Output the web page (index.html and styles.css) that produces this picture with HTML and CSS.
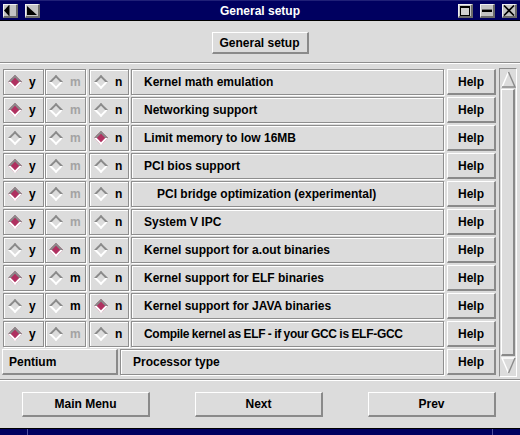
FILE: index.html
```html
<!DOCTYPE html>
<html>
<head>
<meta charset="utf-8">
<link rel="stylesheet" href="styles.css">
</head>
<body>
<div class="titlebar">
  <div class="tb-group">
    <div class="tb-btn"><svg width="12" height="11" viewBox="0 0 12 11"><polygon points="5,0 5,11 0,5.5" fill="#000"/><rect x="5" y="0" width="1" height="11" fill="#606060"/></svg></div>
    <div class="tb-btn"><svg width="12" height="11" viewBox="0 0 12 11"><polygon points="1,1 11,10 1,10" fill="#000"/></svg></div>
  </div>
  <div class="tb-title">General setup</div>
  <div class="tb-group tb-right">
    <div class="tb-btn"><svg width="12" height="11" viewBox="0 0 12 11"><rect x="1.5" y="1.5" width="9" height="9" fill="#d0d0d0" stroke="#000" stroke-width="1"/><rect x="1" y="1" width="10" height="2" fill="#000"/></svg></div>
    <div class="tb-btn"><svg width="12" height="11" viewBox="0 0 12 11"><rect x="1" y="5" width="10" height="2" fill="#000"/><rect x="1" y="4" width="10" height="1" fill="#707070"/></svg></div>
    <div class="tb-btn"><svg width="12" height="11" viewBox="0 0 12 11"><path d="M1 0.5 L11 10.5 M11 0.5 L1 10.5" stroke="#000" stroke-width="1.6"/></svg></div>
  </div>
</div>

<div class="header">
  <div class="btn gen-btn">General setup</div>
</div>
<div class="sep"></div>

<div class="content">
  <div class="rows">
    <div class="row">
      <div class="cell c1"><span class="ind"><span class="dia on"></span></span><span class="lt">y</span></div>
      <div class="cell c2"><span class="ind"><span class="dia"></span></span><span class="lt dis">m</span></div>
      <div class="cell c3"><span class="ind"><span class="dia"></span></span><span class="lt">n</span></div>
      <div class="cell label">Kernel math emulation</div>
      <div class="btn help">Help</div>
    </div>
    <div class="row">
      <div class="cell c1"><span class="ind"><span class="dia on"></span></span><span class="lt">y</span></div>
      <div class="cell c2"><span class="ind"><span class="dia"></span></span><span class="lt dis">m</span></div>
      <div class="cell c3"><span class="ind"><span class="dia"></span></span><span class="lt">n</span></div>
      <div class="cell label">Networking support</div>
      <div class="btn help">Help</div>
    </div>
    <div class="row">
      <div class="cell c1"><span class="ind"><span class="dia"></span></span><span class="lt">y</span></div>
      <div class="cell c2"><span class="ind"><span class="dia"></span></span><span class="lt dis">m</span></div>
      <div class="cell c3"><span class="ind"><span class="dia on"></span></span><span class="lt">n</span></div>
      <div class="cell label">Limit memory to low 16MB</div>
      <div class="btn help">Help</div>
    </div>
    <div class="row">
      <div class="cell c1"><span class="ind"><span class="dia on"></span></span><span class="lt">y</span></div>
      <div class="cell c2"><span class="ind"><span class="dia"></span></span><span class="lt dis">m</span></div>
      <div class="cell c3"><span class="ind"><span class="dia"></span></span><span class="lt">n</span></div>
      <div class="cell label">PCI bios support</div>
      <div class="btn help">Help</div>
    </div>
    <div class="row">
      <div class="cell c1"><span class="ind"><span class="dia on"></span></span><span class="lt">y</span></div>
      <div class="cell c2"><span class="ind"><span class="dia"></span></span><span class="lt dis">m</span></div>
      <div class="cell c3"><span class="ind"><span class="dia"></span></span><span class="lt">n</span></div>
      <div class="cell label indent">PCI bridge optimization (experimental)</div>
      <div class="btn help">Help</div>
    </div>
    <div class="row">
      <div class="cell c1"><span class="ind"><span class="dia on"></span></span><span class="lt">y</span></div>
      <div class="cell c2"><span class="ind"><span class="dia"></span></span><span class="lt dis">m</span></div>
      <div class="cell c3"><span class="ind"><span class="dia"></span></span><span class="lt">n</span></div>
      <div class="cell label">System V IPC</div>
      <div class="btn help">Help</div>
    </div>
    <div class="row">
      <div class="cell c1"><span class="ind"><span class="dia"></span></span><span class="lt">y</span></div>
      <div class="cell c2"><span class="ind"><span class="dia on"></span></span><span class="lt">m</span></div>
      <div class="cell c3"><span class="ind"><span class="dia"></span></span><span class="lt">n</span></div>
      <div class="cell label">Kernel support for a.out binaries</div>
      <div class="btn help">Help</div>
    </div>
    <div class="row">
      <div class="cell c1"><span class="ind"><span class="dia on"></span></span><span class="lt">y</span></div>
      <div class="cell c2"><span class="ind"><span class="dia"></span></span><span class="lt">m</span></div>
      <div class="cell c3"><span class="ind"><span class="dia"></span></span><span class="lt">n</span></div>
      <div class="cell label">Kernel support for ELF binaries</div>
      <div class="btn help">Help</div>
    </div>
    <div class="row">
      <div class="cell c1"><span class="ind"><span class="dia"></span></span><span class="lt">y</span></div>
      <div class="cell c2"><span class="ind"><span class="dia"></span></span><span class="lt">m</span></div>
      <div class="cell c3"><span class="ind"><span class="dia on"></span></span><span class="lt">n</span></div>
      <div class="cell label">Kernel support for JAVA binaries</div>
      <div class="btn help">Help</div>
    </div>
    <div class="row">
      <div class="cell c1"><span class="ind"><span class="dia on"></span></span><span class="lt">y</span></div>
      <div class="cell c2"><span class="ind"><span class="dia"></span></span><span class="lt dis">m</span></div>
      <div class="cell c3"><span class="ind"><span class="dia"></span></span><span class="lt">n</span></div>
      <div class="cell label tight">Compile kernel as ELF - if your GCC is ELF-GCC</div>
      <div class="btn help">Help</div>
    </div>
    <div class="row prow">
      <div class="btn pbtn">Pentium</div>
      <div class="cell plabel">Processor type</div>
      <div class="btn help">Help</div>
    </div>
  </div>
  <div class="scrollbar">
    <svg class="arrow" width="15" height="17" viewBox="0 0 15 17"><path d="M7.5 1 L1 16" stroke="#fff" stroke-width="1.4" fill="none"/><path d="M7.5 1 L14 16 L1 16" stroke="#8a8a8a" stroke-width="1.4" fill="none"/></svg>
    <div class="slider"></div>
    <svg class="arrow" width="15" height="17" viewBox="0 0 15 17"><path d="M14 1 L1 1 L7.5 16" stroke="#fff" stroke-width="1.4" fill="none"/><path d="M14 1 L7.5 16" stroke="#8a8a8a" stroke-width="1.4" fill="none"/></svg>
  </div>
</div>
<div class="sep"></div>

<div class="footer">
  <div class="btn fbtn">Main Menu</div>
  <div class="btn fbtn">Next</div>
  <div class="btn fbtn">Prev</div>
</div>

<div class="strip">
  <div class="strip-seg s1"></div>
  <div class="strip-seg s2"></div>
  <div class="strip-seg s3"></div>
</div>
</body>
</html>
```

FILE: styles.css
```css
* { box-sizing: border-box; }

body {
  margin: 0;
  width: 520px;
  height: 435px;
  overflow: hidden;
  background: #dcdcdc;
  font: bold 12px "Liberation Sans", Arial, sans-serif;
  color: #000;
}

.titlebar {
  height: 21px;
  background: #000060;
  border-top: 1px solid #202078;
  border-bottom: 1px solid #000;
  display: grid;
  grid-template-columns: 1fr auto 1fr;
  align-items: center;
  padding: 0 3px;
}

.tb-group {
  display: flex;
  gap: 7px;
}

.tb-right { justify-self: end; }

.tb-btn {
  width: 15px;
  height: 14px;
  background: #c3c3c3;
  border-style: solid;
  border-width: 1px 2px 2px 1px;
  border-color: #f0f0f0 #6a6a6a #6a6a6a #f0f0f0;
  display: flex;
  align-items: center;
  justify-content: center;
}

.tb-btn svg { display: block; }

.tb-title {
  color: #fff;
  text-align: center;
}

.btn {
  background: #dcdcdc;
  border-style: solid;
  border-width: 1px 2px 2px 1px;
  border-color: #fff #8a8a8a #8a8a8a #fff;
  display: flex;
  align-items: center;
  justify-content: center;
}

.header {
  height: 41px;
  display: flex;
  justify-content: center;
  padding-top: 11px;
}

.gen-btn {
  width: 97px;
  height: 22px;
}

.sep {
  height: 2px;
  border-top: 1px solid #8e8e8e;
  border-bottom: 1px solid #fff;
}

.content {
  display: flex;
  height: 313px;
  padding: 4px 0 0 3px;
  margin-bottom: 2px;
}

.rows {
  width: 493px;
  margin-top: 1px;
  display: flex;
  flex-direction: column;
  gap: 2px;
}

.row {
  display: flex;
  height: 26px;
}

.cell {
  border: 1px solid #8e8e8e;
  box-shadow: inset 1px 1px 0 #fff, 1px 1px 0 #fff;
  display: flex;
  align-items: center;
}

.c1 { width: 41px; margin-right: 1px; padding-left: 4px; }
.c2 { width: 41px; margin-right: 3px; padding-left: 3px; }
.c3 { width: 40px; margin-right: 2px; padding-left: 4px; }

.ind {
  width: 13px;
  height: 13px;
  display: flex;
  align-items: center;
  justify-content: center;
  margin-right: 8px;
}

.dia {
  width: 10px;
  height: 10px;
  flex: none;
  transform: rotate(45deg);
  border-style: solid;
  border-width: 2px;
  border-color: #8a8a8a #fff #fff #8a8a8a;
}

.dia.on { background: #b03060; }

.lt { line-height: 1; }
.dis { color: #a3a3a3; }

.label {
  width: 313px;
  margin-right: 3px;
  padding-left: 12px;
  white-space: nowrap;
  overflow: hidden;
}

.label.indent { padding-left: 25px; }
.label.tight { letter-spacing: -0.3px; word-spacing: -0.4px; }

.help {
  width: 49px;
  height: 26px;
}

.prow { margin-left: -1px; }

.pbtn {
  width: 116px;
  margin-right: 2px;
  justify-content: flex-start;
  padding-left: 6px;
}

.plabel {
  width: 324px;
  margin-right: 3px;
  padding-left: 12px;
}

.scrollbar {
  margin-left: 3px;
  width: 18px;
  height: 309px;
  border-style: solid;
  border-width: 1px;
  border-color: #8e8e8e #fff #fff #8e8e8e;
  display: flex;
  flex-direction: column;
  align-items: center;
  padding: 2px 0;
  gap: 1px;
}

.arrow { display: block; flex: none; }

.slider {
  flex: 1;
  width: 14px;
  border-style: solid;
  border-width: 1px 2px 2px 1px;
  border-color: #fff #8a8a8a #8a8a8a #fff;
}

.footer {
  height: 47px;
  display: flex;
  gap: 45px;
  padding: 11px 0 0 22px;
}

.fbtn {
  width: 128px;
  height: 25px;
}

.strip {
  height: 7px;
  border-top: 1px solid #000;
  background: #000060;
  display: flex;
}

.strip-seg { height: 100%; }
.s1 { width: 28px; border-right: 1px solid #5050a0; }
.s2 { width: 465px; border-right: 1px solid #5050a0; }
.s3 { flex: 1; }
```
